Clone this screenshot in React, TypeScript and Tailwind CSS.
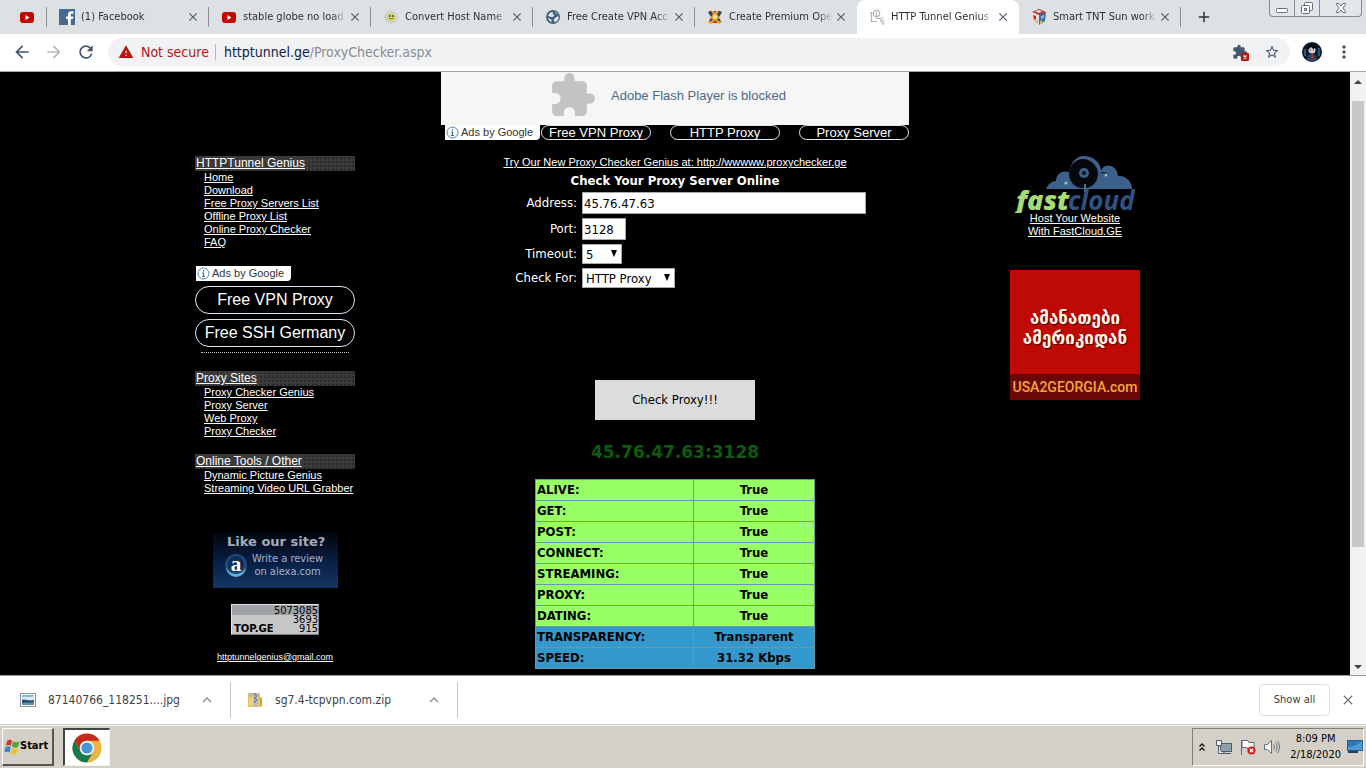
import React from "react";
import {
  MdAdd,
  MdArrowBack,
  MdArrowForward,
  MdClose,
  MdExpandLess,
  MdExtension,
  MdMoreVert,
  MdRefresh,
  MdStarBorder,
  MdWarning,
} from "react-icons/md";

const YouTubeIcon = () => (
  <svg viewBox="0 0 16 16" className="size-4 shrink-0">
    <rect x="1" y="3" width="14" height="11" rx="3" fill="#c00800" />
    <path d="M6.5 6v5l4-2.500z" fill="#fff" />
  </svg>
);

const FacebookIcon = () => (
  <svg viewBox="0 0 16 16" className="size-4 shrink-0">
    <rect width="16" height="16" fill="#466a96" />
    <path d="M9 16V10H7V7.500h2V5.500C9 3.300 10.300 2.200 12.300 2.200H14.500V4.800H13c-1 0-1.200.4-1.200 1.200v1.500h2.600L14 10h-2.200v6z" fill="#fff" />
  </svg>
);

const SunIcon = () => (
  <svg viewBox="0 0 16 16" className="size-4 shrink-0">
    <path
      d="M8 1v14M1 8h14M3 3l10 10M13 3L3 13M5.300 1.500l5.400 13M1.500 5.300l13 5.400M10.700 1.500l-5.400 13M14.500 5.300l-13 5.400"
      stroke="#b9c2b6"
      strokeWidth="1"
    />
    <circle cx="8" cy="8" r="4" fill="#d6d35a" />
    <path d="M6 6h1.500v2H6zM9 6h1.500v2H9z" fill="#39568a" />
    <path d="M6 9.500h4.500" stroke="#7f8e2e" />
  </svg>
);

const GlobeIcon = () => (
  <svg viewBox="0 0 16 16" className="size-4 shrink-0">
    <circle cx="8" cy="8" r="7" fill="#44617f" />
    <path
      d="M3 6.500C4.200 4 6 3 8 3l-.5 2 2 1L8 8H5.500zM10 9l3-2 .8 1.500C13.500 11 12 12.700 10 13.200L8.500 11zM3 9l3 1.200L7 13c-2-.3-3.600-2-4-4z"
      fill="#dfe4e8"
    />
    <path d="M10 3l2.500 2" stroke="#8fd0e0" />
  </svg>
);

const OpenIcon = () => (
  <svg viewBox="0 0 16 16" className="size-4 shrink-0">
    <path d="M1 3l3-2 4 3 4-3 3 2-3 5 3 5-3 2-4-3-4 3-3-2 3-5z" fill="#f0a82c" />
    <path d="M1 3l3-1 2 3-2 3zM15 3l-3-1-2 3 2 3zM2 13l2-4 2 2zM14 13l-2-4-2 2z" fill="#29456b" />
    <path d="M6 2l2 2 2-2zM5 14l3-3 3 3z" fill="#c73516" />
    <circle cx="8" cy="8" r="2" fill="#ffe9a1" />
  </svg>
);

const GeniusIcon = () => (
  <svg viewBox="0 0 16 16" className="size-4 shrink-0" fill="none" stroke="#b4b4b4" strokeWidth="1.200">
    <path d="M1 3.500h2.500M2.500 3.500v9M1 12.500h7" />
    <circle cx="7.500" cy="4.500" r="3.200" />
    <path d="M7.500 3v4M6.500 9.500h5.500v4M13.500 8v1M14 10.500V15M12.500 15h3" />
  </svg>
);

const CubeIcon = () => (
  <svg viewBox="0 0 16 16" className="size-4 shrink-0">
    <path d="M1 3l7 2v11l-6-4z" fill="#d9e2e8" />
    <path d="M15 3L8 5v11l6-4z" fill="#3d6f9e" />
    <path d="M1 3l7-3 7 3-7 3z" fill="#b9372a" />
    <path d="M4 2.500l4-1.500 3 1.500-3 1.200z" fill="#f3f3f3" />
    <path d="M2 6l3 1v3l-2 1z" fill="#c62b18" />
    <path d="M4 10l3 2v3l-3-2zM9 12l2-1v3l-2 1z" fill="#edb43d" />
    <path d="M10 7l3-1v3l-3 1z" fill="#8fb5d3" />
  </svg>
);

const InfoIcon = () => (
  <svg viewBox="0 0 13 13" className="size-[13px] shrink-0">
    <circle cx="6.500" cy="6.500" r="5.500" fill="#fff" stroke="#4b86ad" />
    <path d="M6.500 3v1.500M5 6h1.500v3.500M5 9.500h3" stroke="#2e76a6" strokeWidth="1.200" fill="none" />
  </svg>
);

const AvatarIcon = () => (
  <svg viewBox="0 0 20 20" className="size-5">
    <circle cx="10" cy="10" r="10" fill="#0d1b2e" />
    <path d="M2 7h2v7H2zM16 6h2v8h-2z" fill="#2c5580" />
    <path d="M5 18c0-4 2-6 5-6s5 2 5 6c-3 2-7 2-10 0z" fill="#2a4364" />
    <circle cx="10" cy="8" r="3.500" fill="#d9d2cf" />
    <path d="M5 8c0-4 2-6 5-6s6 2 5 6l-2-2-2 1-2-2-2 2z" fill="#04070f" />
    <path d="M8 8h1M11 8h1" stroke="#1b2b46" />
    <path d="M9.500 13h1.500v4H9.500z" fill="#b8352f" />
  </svg>
);

const ChromeIcon = () => (
  <svg viewBox="0 0 30 30" className="size-[30px]">
    <circle cx="15" cy="15" r="14.500" fill="#eab542" />
    <path d="M2.440 7.750A14.500 14.500 0 0 1 27.560 7.750H15A7.250 7.250 0 0 0 8.700 18.600z" fill="#c72a1a" />
    <path d="M2.440 7.750A14.500 14.500 0 0 0 15 29.500L21.300 18.600A7.250 7.250 0 0 1 8.700 18.600z" fill="#177a4e" />
    <circle cx="15" cy="15" r="7.250" fill="#f4f6f6" />
    <circle cx="15" cy="15" r="5.600" fill="#4695d6" />
  </svg>
);

const WindowsFlag = () => (
  <svg viewBox="0 0 16 16" className="size-4 shrink-0">
    <path d="M3 2c2-2 4-1.500 5-.5L7 7c-1-1-3-1.500-5-.3z" fill="#d0391c" />
    <path d="M9 2c2 1.500 4 1.500 6.500.5L14 8c-2 1-4 .8-6-.5z" fill="#4ca63a" />
    <path d="M1.500 8C3.500 7 5.500 7 6.700 8L5.500 13.500C4 12.500 2 12.500.3 13.500z" fill="#3f86cf" />
    <path d="M8 9c2 1.200 4 1.200 5.800.3L12.500 15c-2 1-4 .6-6-.5z" fill="#f0c233" />
  </svg>
);

const ImageFileIcon = () => (
  <svg viewBox="0 0 16 16" className="size-4 shrink-0">
    <rect x=".5" y="1.500" width="15" height="13" fill="#fff" stroke="#8797aa" />
    <rect x="2" y="3" width="12" height="10" fill="#7cb1d8" />
    <path d="M2 5c3-1 6 1 12-1v4H2z" fill="#dbeaf4" />
    <path d="M2 8c3-1.500 6 2 12 0v5H2z" fill="#284d73" />
    <path d="M2 11c4-1 8 0 12-1v3H2z" fill="#5a93ab" />
  </svg>
);

const ZipFileIcon = () => (
  <svg viewBox="0 0 16 16" className="size-4 shrink-0">
    <path d="M1 1h12v14H1z" fill="#e0c368" />
    <path d="M1 1h12v3H1z" fill="#c5bd98" />
    <path d="M13 5l2 1v8l-2 1z" fill="#cfa93a" />
    <path d="M7 1h3v14H7z" fill="#aebdcc" />
    <path d="M7 2h1.500M8.500 4H10M7 6h1.500M8.500 8H10M7 10h1.500" stroke="#26384d" />
    <path d="M3 6v7M5 5v8" stroke="#f4e2a3" />
  </svg>
);

const FastCloudLogo = () => (
  <svg viewBox="0 0 120 58" className="h-[58px] w-[120px]" role="img" aria-label="fastcloud">
    <path
      d="M31 34c2-5 6-8 10-8 0-7 6-11 13-9C56 7 61 1 69 1c9 0 16 6 17 14 5-8 16-5 17 6 8-1 14 6 14 13z"
      fill="#3c628c"
    />
    <path d="M54 19c0-8 6-15 14-15s15 7 15 15c0 7-5 13-12 14h-5c-7-1-12-7-12-14z" fill="#05080c" />
    <circle cx="69" cy="18" r="5" fill="#3c628c" />
    <circle cx="69" cy="18" r="2" fill="#05080c" />
    <path d="M70 29v8" stroke="#4b7098" strokeWidth="2" />
    <path d="M86 18c3-1 6 0 7 2" stroke="#05080c" fill="none" />
    <circle cx="51" cy="28" r="1.500" fill="#79d6c0" />
    <circle cx="91" cy="20" r="1.500" fill="#79d6c0" />
    <text x="1" y="55" fontFamily="Open Sans, sans-serif" fontSize="27" fontWeight="800" fontStyle="italic" fill="#a5dc76">
      fast
    </text>
    <text x="53" y="55" fontFamily="Open Sans, sans-serif" fontSize="26" fontWeight="700" fontStyle="italic" fill="#2f5280">
      cloud
    </text>
  </svg>
);

type TabInfo = { title: string; icon: React.ReactNode; active?: boolean; divider?: boolean };

const tabs: TabInfo[] = [
  { title: "(1) Facebook", icon: <FacebookIcon />, divider: true },
  { title: "stable globe no load", icon: <YouTubeIcon />, divider: true },
  { title: "Convert Host Name", icon: <SunIcon />, divider: true },
  { title: "Free Create VPN Acc", icon: <GlobeIcon />, divider: true },
  { title: "Create Premium Ope", icon: <OpenIcon /> },
  { title: "HTTP Tunnel Genius", icon: <GeniusIcon />, active: true },
  { title: "Smart TNT Sun work", icon: <CubeIcon />, divider: true },
];

function Tab({ title, icon, active, divider }: TabInfo) {
  return (
    <div
      className={
        active
          ? "flex h-full w-[162px] min-w-0 items-center rounded-t-lg bg-white pr-2 pl-3"
          : "flex h-full w-[162px] min-w-0 items-center pr-2 pl-3"
      }
    >
      {icon}
      <a
        href="#tab"
        className="ml-1.5 min-w-0 flex-1 overflow-hidden whitespace-nowrap [mask-image:linear-gradient(to_right,black_85%,transparent)]"
      >
        {title}
      </a>
      <button aria-label={`Close ${title}`} className="ml-px text-[#4b5e73]">
        <MdClose className="size-3.5" />
      </button>
      <span className={divider ? "ml-2 -mr-2 h-5 w-px bg-[#8b9095]" : "ml-2 -mr-2 h-5 w-px"} />
    </div>
  );
}

function TabStrip() {
  return (
    <header className="flex h-[34px] shrink-0 items-center bg-[#dee1e4] text-[11px] text-[#2d3033]">
      <div className="flex w-[47px] shrink-0 items-center pl-[19px]">
        <YouTubeIcon />
        <span className="ml-auto h-5 w-px bg-[#8b9095]" />
      </div>
      {tabs.map((tab) => (
        <Tab key={tab.title} {...tab} />
      ))}
      <button aria-label="New tab" className="ml-3.5 text-[#2d3238]">
        <MdAdd className="size-[18px]" />
      </button>
      <div className="mr-1 ml-auto flex h-[17px] self-start rounded-b border border-t-0 border-[#858b91] bg-[#e3e6e9]">
        <button aria-label="Minimize" className="flex w-[25px] items-center justify-center border-r border-[#858b91]">
          <svg viewBox="0 0 14 12" className="h-3 w-3.5">
            <rect x="1.500" y="6.500" width="11" height="4" rx="1" fill="#fff" stroke="#5a7087" />
          </svg>
        </button>
        <button aria-label="Restore" className="flex w-[25px] items-center justify-center border-r border-[#858b91]">
          <svg viewBox="0 0 14 14" className="size-3.5" fill="#fff" stroke="#5a7087">
            <rect x="4.500" y="1.500" width="8" height="8" rx="1" />
            <rect x="1.500" y="4.500" width="8" height="8" rx="1" />
            <rect x="4.500" y="7.500" width="2" height="2" />
          </svg>
        </button>
        <button aria-label="Close window" className="flex w-[41px] items-center justify-center">
          <svg viewBox="0 0 12 12" className="size-3">
            <path d="M1.500 1.500H4L6 4l2-2.500h2.500v1L8 6l2.500 3.500v1H8L6 8l-2 2.500H1.500v-1L4 6 1.500 2.500z" fill="#fff" stroke="#5a7087" />
          </svg>
        </button>
      </div>
    </header>
  );
}

function Toolbar() {
  return (
    <nav className="flex h-[38px] shrink-0 items-center border-b border-[#a5a5a5] bg-white pb-px pl-3 text-[#44586c]">
      <button aria-label="Back">
        <MdArrowBack className="size-5" />
      </button>
      <button aria-label="Forward" className="ml-3 text-[#b9b9b9]">
        <MdArrowForward className="size-5" />
      </button>
      <button aria-label="Reload" className="ml-3">
        <MdRefresh className="size-5" />
      </button>
      <div className="ml-3 flex h-7 min-w-0 flex-1 items-center rounded-full bg-[#f0f2f4] pr-2.5 pl-2.5 text-[14px]">
        <MdWarning className="size-4 shrink-0 text-[#b81410]" />
        <span className="ml-[7px] text-[#b81410]">Not secure</span>
        <span className="mr-2 ml-1.5 h-4 w-px bg-[#b3b7bb]" />
        <span className="text-[#8a8d91]">
          <span className="text-[#0c1d4a]">httptunnel.ge</span>/ProxyChecker.aspx
        </span>
        <button aria-label="Plugin blocked" className="relative ml-auto">
          <MdExtension className="size-4" />
          <svg viewBox="0 0 8 8" className="absolute -right-px -bottom-px size-2">
            <rect width="8" height="8" rx="1" fill="#c1160c" />
            <path d="M2.500 2.500l3 3M5.500 2.500l-3 3" stroke="#fff" strokeWidth="1.200" />
          </svg>
        </button>
        <button aria-label="Bookmark" className="ml-4">
          <MdStarBorder className="size-4" />
        </button>
      </div>
      <button aria-label="Profile" className="ml-3">
        <AvatarIcon />
      </button>
      <button aria-label="Menu" className="mr-3 ml-3">
        <MdMoreVert className="size-5" />
      </button>
    </nav>
  );
}

function LinkGroup({ title, links }: { title: string; links: string[] }) {
  return (
    <section className="font-['Liberation_Sans',sans-serif] text-[11px] leading-[13px]">
      <h2 className="bg-[#3a3a3a] bg-[radial-gradient(#2a2a2a_1px,transparent_1px)] bg-[size:4px_4px] pl-px text-[12px] leading-[15px]">
        <a href="#group" className="bg-[#3a3a3a] underline">
          {title}
        </a>
      </h2>
      <ul className="pl-[9px]">
        {links.map((link) => (
          <li key={link} className="whitespace-nowrap">
            <a href="#link" className="underline">
              {link}
            </a>
          </li>
        ))}
      </ul>
    </section>
  );
}

const AdsLabel = () => (
  <div className="flex h-[15px] w-[95px] shrink-0 items-center gap-0.5 rounded-br bg-white pl-px font-['Liberation_Sans',sans-serif] text-[11px] whitespace-nowrap text-[#333]">
    <InfoIcon />
    Ads by Google
  </div>
);

function LeftColumn() {
  return (
    <aside className="flex flex-col pt-[84px]">
      <LinkGroup
        title="HTTPTunnel Genius"
        links={["Home", "Download", "Free Proxy Servers List", "Offline Proxy List", "Online Proxy Checker", "FAQ"]}
      />
      <div className="mt-[17px] flex flex-col font-['Liberation_Sans',sans-serif] text-[16px]">
        <div className="pl-px">
          <AdsLabel />
        </div>
        <a href="#vpn" className="mt-[5px] flex h-7 items-center justify-center rounded-full border border-[#dfe6f5]">
          Free VPN Proxy
        </a>
        <a href="#ssh" className="mt-[5px] flex h-7 items-center justify-center rounded-full border border-[#dfe6f5]">
          Free SSH Germany
        </a>
      </div>
      <hr className="mx-[6px] mt-[5px] mb-[18px] border-t border-dotted border-[#c8c8c8]" />
      <LinkGroup title="Proxy Sites" links={["Proxy Checker Genius", "Proxy Server", "Web Proxy", "Proxy Checker"]} />
      <div className="h-4" />
      <LinkGroup title="Online Tools / Other" links={["Dynamic Picture Genius", "Streaming Video URL Grabber"]} />
      <a
        href="#alexa"
        className="mt-[37px] ml-[18px] flex h-14 w-[125px] flex-col bg-linear-to-b from-[#02050c] via-[#081d42] to-[#153763] text-[#a4b4cc]"
      >
        <span className="pl-3.5 font-['DejaVu_Sans',sans-serif] text-[13px] leading-[20px] font-bold whitespace-nowrap text-[#a5acb8]">
          Like our site?
        </span>
        <span className="flex items-center gap-1 pl-[11px] text-[11px] leading-[13px]">
          <svg viewBox="0 0 24 24" className="size-6 shrink-0">
            <circle cx="12" cy="12" r="11" fill="#1c4d7d" />
            <path d="M2 14a10 10 0 0 0 20 0c-2 5-6 7-10 7s-8-2-10-7z" fill="#5fb1dc" />
            <circle cx="12" cy="11" r="8" fill="#102c52" />
            <text x="12" y="18" textAnchor="middle" fontSize="21" fontWeight="700" fontFamily="Liberation Serif, serif" fill="#fff">
              a
            </text>
          </svg>
          <span className="text-center whitespace-nowrap">
            Write a review
            <br />
            on alexa.com
          </span>
        </span>
      </a>
      <a
        href="#top"
        className="mt-4 ml-9 flex h-[31px] w-[88px] items-end border border-[#e2e5e8] border-r-[#77828e] border-b-[#77828e] bg-linear-to-b from-[#9fa3a8] from-35% to-[#c6c6c6] to-35% text-[11px] leading-[9px] text-black"
      >
        <span className="pb-px pl-0.5 font-['DejaVu_Sans',sans-serif] text-[10px] font-bold">TOP.GE</span>
        <span className="ml-auto pb-px text-right">
          5073085
          <br />
          3693
          <br />
          915
        </span>
      </a>
      <a
        href="#mail"
        className="mt-4 self-center font-['Liberation_Sans',sans-serif] text-[9px] leading-[12px] underline"
      >
        httptunnelgenius@gmail.com
      </a>
    </aside>
  );
}

const adLinks = ["Free VPN Proxy", "HTTP Proxy", "Proxy Server"];

const results: [string, string][] = [
  ["ALIVE:", "True"],
  ["GET:", "True"],
  ["POST:", "True"],
  ["CONNECT:", "True"],
  ["STREAMING:", "True"],
  ["PROXY:", "True"],
  ["DATING:", "True"],
  ["TRANSPARENCY:", "Transparent"],
  ["SPEED:", "31.32 Kbps"],
];

const selectStyle = "h-5 appearance-none border border-[#a9a9a9] bg-white pl-[3px] text-black";

const SelectArrow = () => (
  <svg viewBox="0 0 8 8" className="pointer-events-none absolute top-1.5 right-1 size-2">
    <path d="M1 0h6L4 7z" fill="#000" />
  </svg>
);

function CenterColumn() {
  return (
    <main className="flex flex-col items-center">
      <div className="flex h-[53px] w-[468px] items-center bg-[#f6f6f6] pb-1.5 pl-[107px] font-['Liberation_Sans',sans-serif] text-[13px] text-[#4a6a8a]">
        <MdExtension className="mr-3.5 size-[49px] text-[#c3c3c3]" />
        Adobe Flash Player is blocked
      </div>
      <div className="flex h-[15px] w-[468px] pl-1 font-['Liberation_Sans',sans-serif] text-[13px] leading-[15px]">
        <AdsLabel />
        <div className="ml-px flex flex-1 justify-between">
          {adLinks.map((link) => (
            <a
              key={link}
              href="#ad"
              className="flex h-[15px] w-[110px] items-center justify-center rounded-full border border-[#dfe6f5] leading-[13px]"
            >
              {link}
            </a>
          ))}
        </div>
      </div>
      <a href="#genius" className="mt-[15px] font-['Liberation_Sans',sans-serif] text-[11px] leading-[15px] underline">
        Try Our New Proxy Checker Genius at: http://wwwww.proxychecker.ge
      </a>
      <h1 className="text-[13px] leading-[22px] font-bold">Check Your Proxy Server Online</h1>
      <form className="flex w-[382px] flex-col items-center text-[13px]" onSubmit={(e) => e.preventDefault()}>
        <div className="grid w-full grid-cols-[93px_1fr] items-center justify-items-start gap-x-[5px] gap-y-1">
          <label htmlFor="address" className="justify-self-end">
            Address:
          </label>
          <input
            id="address"
            defaultValue="45.76.47.63"
            className="h-[22px] w-full border border-[#a9a9a9] bg-white px-px text-black"
          />
          <label htmlFor="port" className="justify-self-end">
            Port:
          </label>
          <input
            id="port"
            defaultValue="3128"
            className="h-[22px] w-11 border border-[#a9a9a9] bg-white px-px text-black"
          />
          <label htmlFor="timeout" className="justify-self-end">
            Timeout:
          </label>
          <div className="relative flex">
            <select id="timeout" className={`${selectStyle} w-10`}>
              <option>5</option>
            </select>
            <SelectArrow />
          </div>
          <label htmlFor="kind" className="justify-self-end">
            Check For:
          </label>
          <div className="relative flex">
            <select id="kind" className={`${selectStyle} w-[93px]`}>
              <option>HTTP Proxy</option>
            </select>
            <SelectArrow />
          </div>
        </div>
        <button className="mt-[92px] h-10 w-40 bg-[#dcdcdc] text-black">Check Proxy!!!</button>
      </form>
      <h2 className="mt-[18px] font-['DejaVu_Sans',sans-serif] text-[17px] leading-7 font-bold text-[#0b5c0b]">
        45.76.47.63:3128
      </h2>
      <table className="mt-[13px] w-[280px] table-fixed border-collapse text-[13px] leading-5 font-bold text-black">
        <tbody>
          {results.map(([name, value], i) => (
            <tr key={name} className={i < 7 ? "bg-[#99ff66]" : "bg-[#3399cc]"}>
              <th scope="row" className="w-[158px] border border-[#6699aa] py-0 pl-px text-left font-bold">
                {name}
              </th>
              <td className="border border-[#6699aa] p-0 text-center">{value}</td>
            </tr>
          ))}
        </tbody>
      </table>
    </main>
  );
}

function RightColumn() {
  return (
    <aside className="flex flex-col items-center pt-[83px]">
      <FastCloudLogo />
      <a
        href="#fastcloud"
        className="-mt-px text-center font-['Liberation_Sans',sans-serif] text-[11px] leading-[13px] underline"
      >
        Host Your Website
        <br />
        With FastCloud.GE
      </a>
      <a
        href="#usa"
        className="mt-8 flex h-[130px] w-[130px] flex-col bg-[#bf0904] text-center whitespace-nowrap text-[#fff6e6]"
      >
        <span className="flex flex-1 flex-col justify-end pb-[26px] font-['DejaVu_Sans',sans-serif] text-[17px] leading-5 font-bold [text-shadow:1px_1px_1px_#4a0000]">
          ამანათები
          <br />
          ამერიკიდან
        </span>
        <span className="bg-[#6b0805] font-['Roboto',sans-serif] text-[14px] leading-[26px] font-medium text-[#f5a63b]">
          USA2GEORGIA.com
        </span>
      </a>
    </aside>
  );
}

function PageScrollbar() {
  return (
    <div className="flex w-4 shrink-0 flex-col items-center bg-[#f1f2f3]">
      <svg viewBox="0 0 16 16" className="mt-0.5 size-4">
        <path d="M4 10l4-4 4 4z" fill="#3f4347" />
      </svg>
      <div className="mt-[11px] flex w-full flex-1 flex-col px-0.5">
        <div className="h-[80%] bg-[#c6c7c8]" />
      </div>
      <svg viewBox="0 0 16 16" className="size-4">
        <path d="M4 6h8l-4 4z" fill="#3f4347" />
      </svg>
    </div>
  );
}

function DownloadItem({ icon, name }: { icon: React.ReactNode; name: string }) {
  return (
    <div className="flex h-9 items-center border-r border-[#c9c9c9] pr-3.5 pl-4 text-[#3c3f43]">
      {icon}
      <span className="ml-3 w-[150px] text-[12px]">{name}</span>
      <button aria-label={`Options for ${name}`} className="text-[#8b8e91]">
        <MdExpandLess className="size-[18px]" />
      </button>
    </div>
  );
}

function DownloadBar() {
  return (
    <section className="flex h-[50px] shrink-0 items-center border-y border-t-[#9b9b9b] border-b-[#d0cdc6] bg-white pl-1">
      <DownloadItem icon={<ImageFileIcon />} name="87140766_118251....jpg" />
      <DownloadItem icon={<ZipFileIcon />} name="sg7.4-tcpvpn.com.zip" />
      <button className="ml-auto h-8 w-[71px] rounded border border-[#dcdfe2] text-[11px] text-[#3c4043]">Show all</button>
      <button aria-label="Close downloads" className="mr-2.5 ml-2.5 text-[#777b7f]">
        <MdClose className="size-4" />
      </button>
    </section>
  );
}

function Taskbar() {
  return (
    <footer className="flex h-[43px] shrink-0 items-center border-t border-[#f5f4f1] bg-[#d4d0c8] px-0.5 text-black">
      <button className="flex h-[38px] w-[52px] items-center border-t border-r-2 border-b-2 border-l border-t-white border-r-[#555] border-b-[#555] border-l-white pl-px text-[11px] font-bold">
        <WindowsFlag />
        Start
      </button>
      <button
        aria-label="Google Chrome"
        className="ml-[9px] flex h-[38px] w-[47px] items-center justify-center border-2 border-r border-b border-t-[#444] border-r-[#f5f4f1] border-b-[#f5f4f1] border-l-[#444] bg-white"
      >
        <ChromeIcon />
      </button>
      <div className="ml-auto flex h-[38px] items-center border border-t-[#808080] border-r-white border-b-white border-l-[#808080] pl-[5px] text-[11px]">
        <svg viewBox="0 0 8 10" className="h-2.5 w-2" fill="none" stroke="#111" strokeWidth="1.300">
          <path d="M1.500 4.500L4 2l2.500 2.500M1.500 8.500L4 6l2.500 2.500" />
        </svg>
        <svg viewBox="0 0 16 16" className="ml-2.5 size-4">
          <rect x="4.500" y="4.500" width="11" height="8" fill="#8fa0ad" stroke="#4c5d6c" />
          <path d="M4 14.500h11M8 13v2" stroke="#4c5d6c" />
          <path d="M.5 1.500h5v5h-5zM2.500 6.500v8h3" fill="#f7f7f7" stroke="#4c5d6c" />
        </svg>
        <svg viewBox="0 0 16 16" className="ml-2 size-4">
          <path d="M1.500 1v15" stroke="#5d6a78" />
          <path d="M2 1.500h6l1 2h5v7H8l-1-2H2z" fill="#fff" stroke="#5d6a78" />
          <circle cx="11.500" cy="11.500" r="4" fill="#c71b11" />
          <path d="M9.700 9.700l3.600 3.600M13.300 9.700l-3.600 3.600" stroke="#fff" strokeWidth="1.300" />
        </svg>
        <svg viewBox="0 0 16 16" className="ml-2 size-4" fill="none" stroke="#62717f">
          <path d="M.5 5.500h3l4-4v13l-4-4h-3z" fill="#f7f7f7" />
          <path d="M9.500 5.500c1 1.500 1 3.500 0 5M11.500 3.500c2 2.500 2 6.500 0 9M13.500 2c2.500 3.500 2.500 8.500 0 12" />
        </svg>
        <div className="ml-2.5 text-center leading-4">
          8:09 PM
          <br />
          2/18/2020
        </div>
        <svg viewBox="0 0 16 14" className="ml-1.5 h-3.5 w-4">
          <rect x=".5" y=".5" width="15" height="10" fill="#3279b8" stroke="#2b5b85" />
          <path d="M1 7c5 0 9-2 14-6v9H1z" fill="#4a9bd8" />
          <path d="M1 12h10" stroke="#24405c" strokeWidth="2" />
        </svg>
      </div>
    </footer>
  );
}

export default function App() {
  return (
    <div className="flex h-screen flex-col font-['DejaVu_Sans_Condensed','DejaVu_Sans',sans-serif]">
      <TabStrip />
      <Toolbar />
      <div className="flex min-h-0 flex-1 overflow-hidden bg-black text-white">
        <div className="min-w-0 flex-1 overflow-hidden">
          <div className="mx-auto grid max-w-[960px] grid-cols-[160px_1fr_160px]">
            <LeftColumn />
            <CenterColumn />
            <RightColumn />
          </div>
        </div>
        <PageScrollbar />
      </div>
      <DownloadBar />
      <Taskbar />
    </div>
  );
}
